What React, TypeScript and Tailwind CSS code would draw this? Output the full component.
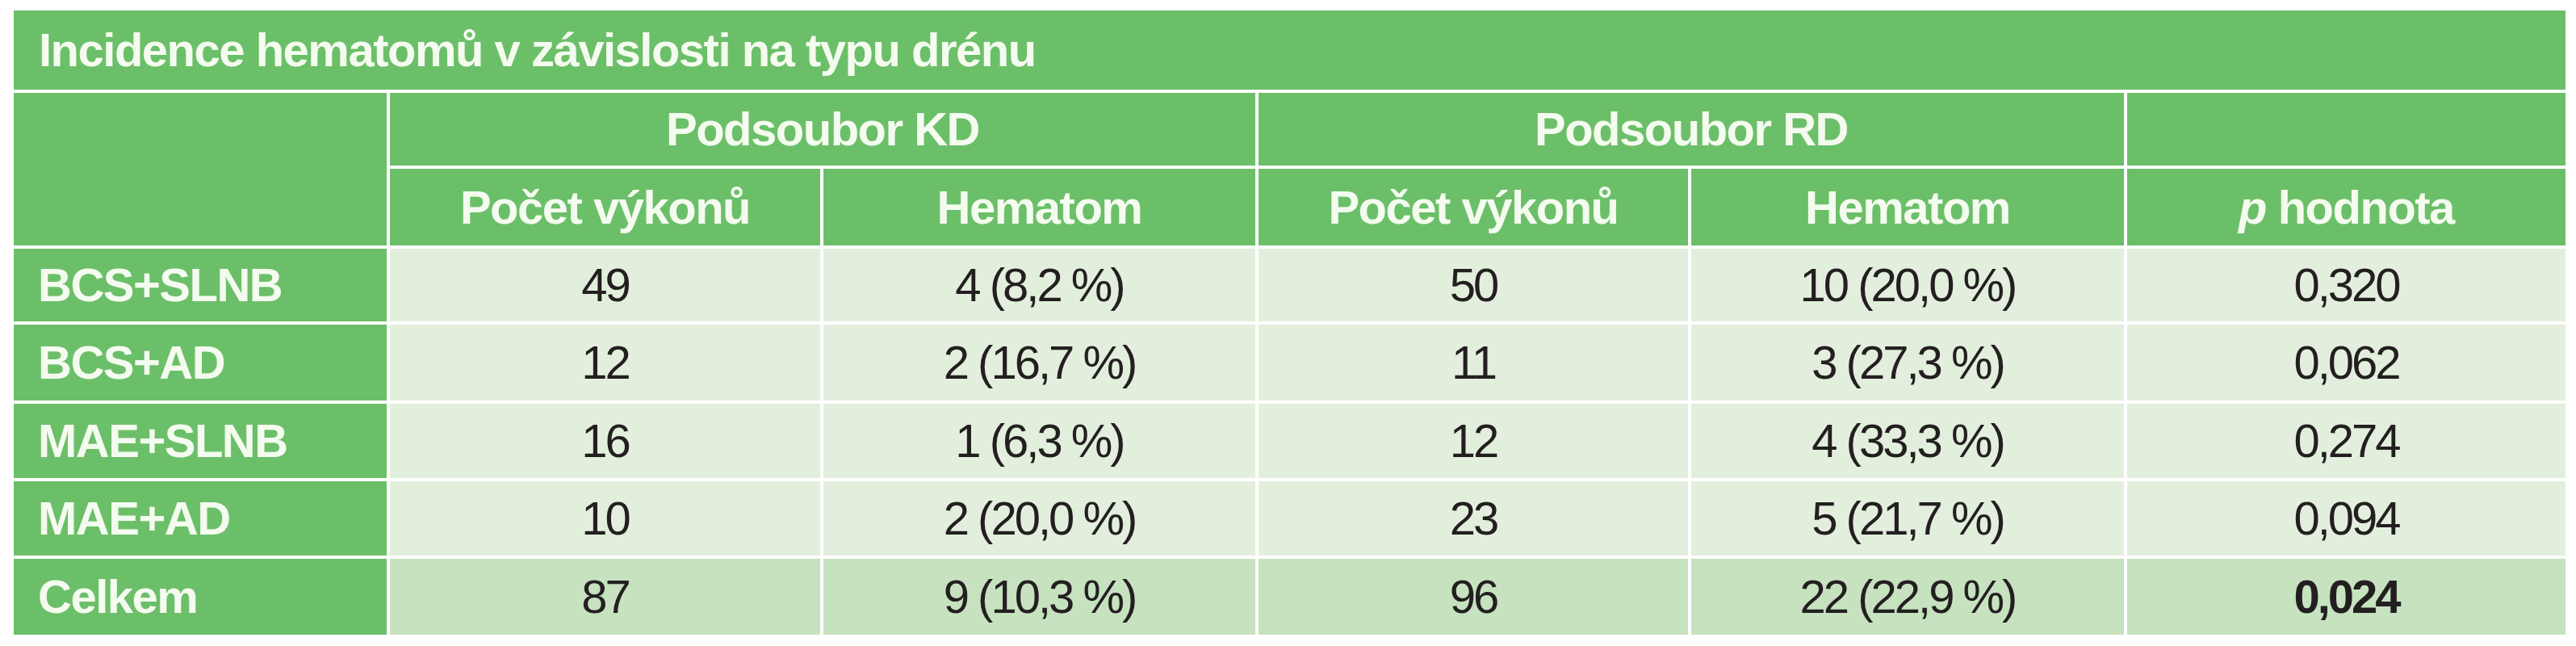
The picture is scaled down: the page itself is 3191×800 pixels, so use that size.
const rows = [
  { label: 'BCS+SLNB', kdCount: '49', kdHem: '4 (8,2 %)', rdCount: '50', rdHem: '10 (20,0 %)', p: '0,320' },
  { label: 'BCS+AD', kdCount: '12', kdHem: '2 (16,7 %)', rdCount: '11', rdHem: '3 (27,3 %)', p: '0,062' },
  { label: 'MAE+SLNB', kdCount: '16', kdHem: '1 (6,3 %)', rdCount: '12', rdHem: '4 (33,3 %)', p: '0,274' },
  { label: 'MAE+AD', kdCount: '10', kdHem: '2 (20,0 %)', rdCount: '23', rdHem: '5 (21,7 %)', p: '0,094' },
]

const total = { label: 'Celkem', kdCount: '87', kdHem: '9 (10,3 %)', rdCount: '96', rdHem: '22 (22,9 %)', p: '0,024' }

const head = 'bg-[#6cbf69] text-[#f4fbef] font-bold tracking-[-1.5px] flex items-center'
const cell = 'flex items-center justify-center text-[#231f20] tracking-[-3px]'

export default function App() {
  return (
    <div className="w-[3191px] h-[800px] bg-white pl-[17px] pt-[13px] font-['Liberation_Sans',Arial,sans-serif] text-[58px] leading-none">
      <div className="grid w-[3161px] grid-cols-[462px_533px_535px_532px_536px_543px] grid-rows-[98px_90px_95px_90px_94px_92px_92px_94px] gap-[4px] bg-white">
        {/* Title */}
        <div className={`${head} col-span-6 pl-[31px]`}>Incidence hematomů v závislosti na typu drénu</div>

        {/* Header rows */}
        <div className={`${head} row-span-2`} />
        <div className={`${head} col-span-2 justify-center`}>Podsoubor KD</div>
        <div className={`${head} col-span-2 justify-center`}>Podsoubor RD</div>
        <div className={head} />
        <div className={`${head} justify-center`}>Počet výkonů</div>
        <div className={`${head} justify-center`}>Hematom</div>
        <div className={`${head} justify-center`}>Počet výkonů</div>
        <div className={`${head} justify-center`}>Hematom</div>
        <div className={`${head} justify-center`}>
          <span className="italic">p</span>&nbsp;hodnota
        </div>

        {/* Data rows */}
        {rows.map((r) => (
          <div key={r.label} className="contents">
            <div className={`${head} pl-[30px]`}>{r.label}</div>
            <div className={`${cell} bg-[#e3efdd]`}>{r.kdCount}</div>
            <div className={`${cell} bg-[#e3efdd]`}>{r.kdHem}</div>
            <div className={`${cell} bg-[#e3efdd]`}>{r.rdCount}</div>
            <div className={`${cell} bg-[#e3efdd]`}>{r.rdHem}</div>
            <div className={`${cell} bg-[#e3efdd]`}>{r.p}</div>
          </div>
        ))}

        {/* Total */}
        <div className={`${head} pl-[30px]`}>{total.label}</div>
        <div className={`${cell} bg-[#c6e2bf]`}>{total.kdCount}</div>
        <div className={`${cell} bg-[#c6e2bf]`}>{total.kdHem}</div>
        <div className={`${cell} bg-[#c6e2bf]`}>{total.rdCount}</div>
        <div className={`${cell} bg-[#c6e2bf]`}>{total.rdHem}</div>
        <div className={`${cell} bg-[#c6e2bf] font-bold`}>{total.p}</div>
      </div>
    </div>
  )
}
